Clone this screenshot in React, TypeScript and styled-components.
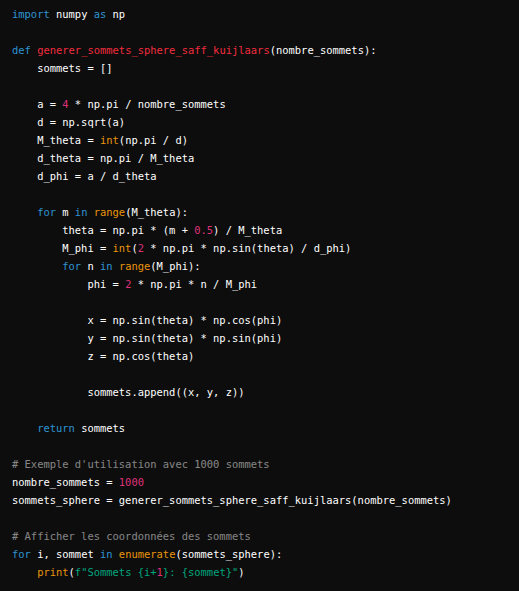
import React from "react";
import styled, { createGlobalStyle } from "styled-components";

const Global = createGlobalStyle`
  html, body { margin: 0; padding: 0; background: #0d0d0d; }
  #root { min-height: 100vh; background: #0d0d0d; }
`;

type Kind = "kw" | "title" | "num" | "bi" | "str" | "cm" | "txt";

const colors: Record<Kind, string> = {
  kw: "#2e95d3",
  title: "#f22c3d",
  num: "#df3079",
  bi: "#e9950c",
  str: "#00a67d",
  cm: "rgba(255,255,255,0.5)",
  txt: "#ffffff",
};

const Block = styled.pre`
  margin: 0;
  padding: 5px 12px;
  background: #0d0d0d;
  font-family: "DejaVu Sans Mono", "Liberation Mono", monospace;
  font-size: 10.45px;
  line-height: 18px;
  color: #ffffff;
  white-space: pre;
`;

const Line = styled.div`
  height: 18px;
`;

const Tok = styled.span<{ $k: Kind }>`
  color: ${(p) => colors[p.$k]};
`;

type T = [Kind, string];
const K = (s: string): T => ["kw", s];
const X = (s: string): T => ["txt", s];
const N = (s: string): T => ["num", s];
const B = (s: string): T => ["bi", s];
const S = (s: string): T => ["str", s];
const C = (s: string): T => ["cm", s];
const F = (s: string): T => ["title", s];

const lines: T[][] = [
  [K("import"), X(" numpy "), K("as"), X(" np")],
  [],
  [K("def"), X(" "), F("generer_sommets_sphere_saff_kuijlaars"), X("(nombre_sommets):")],
  [X("    sommets = []")],
  [],
  [X("    a = "), N("4"), X(" * np.pi / nombre_sommets")],
  [X("    d = np.sqrt(a)")],
  [X("    M_theta = "), B("int"), X("(np.pi / d)")],
  [X("    d_theta = np.pi / M_theta")],
  [X("    d_phi = a / d_theta")],
  [],
  [X("    "), K("for"), X(" m "), K("in"), X(" "), B("range"), X("(M_theta):")],
  [X("        theta = np.pi * (m + "), N("0.5"), X(") / M_theta")],
  [X("        M_phi = "), B("int"), X("("), N("2"), X(" * np.pi * np.sin(theta) / d_phi)")],
  [X("        "), K("for"), X(" n "), K("in"), X(" "), B("range"), X("(M_phi):")],
  [X("            phi = "), N("2"), X(" * np.pi * n / M_phi")],
  [],
  [X("            x = np.sin(theta) * np.cos(phi)")],
  [X("            y = np.sin(theta) * np.sin(phi)")],
  [X("            z = np.cos(theta)")],
  [],
  [X("            sommets.append((x, y, z))")],
  [],
  [X("    "), K("return"), X(" sommets")],
  [],
  [C("# Exemple d'utilisation avec 1000 sommets")],
  [X("nombre_sommets = "), N("1000")],
  [X("sommets_sphere = generer_sommets_sphere_saff_kuijlaars(nombre_sommets)")],
  [],
  [C("# Afficher les coordonnées des sommets")],
  [K("for"), X(" i, sommet "), K("in"), X(" "), B("enumerate"), X("(sommets_sphere):")],
  [X("    "), B("print"), X("("), S('f"Sommets {i+'), N("1"), S('}: {sommet}"'), X(")")],
];

export default function App() {
  return (
    <>
      <Global />
      <Block>
        {lines.map((toks, i) => (
          <Line key={i}>
            {toks.map(([k, s], j) => (
              <Tok key={j} $k={k}>
                {s}
              </Tok>
            ))}
          </Line>
        ))}
      </Block>
    </>
  );
}
